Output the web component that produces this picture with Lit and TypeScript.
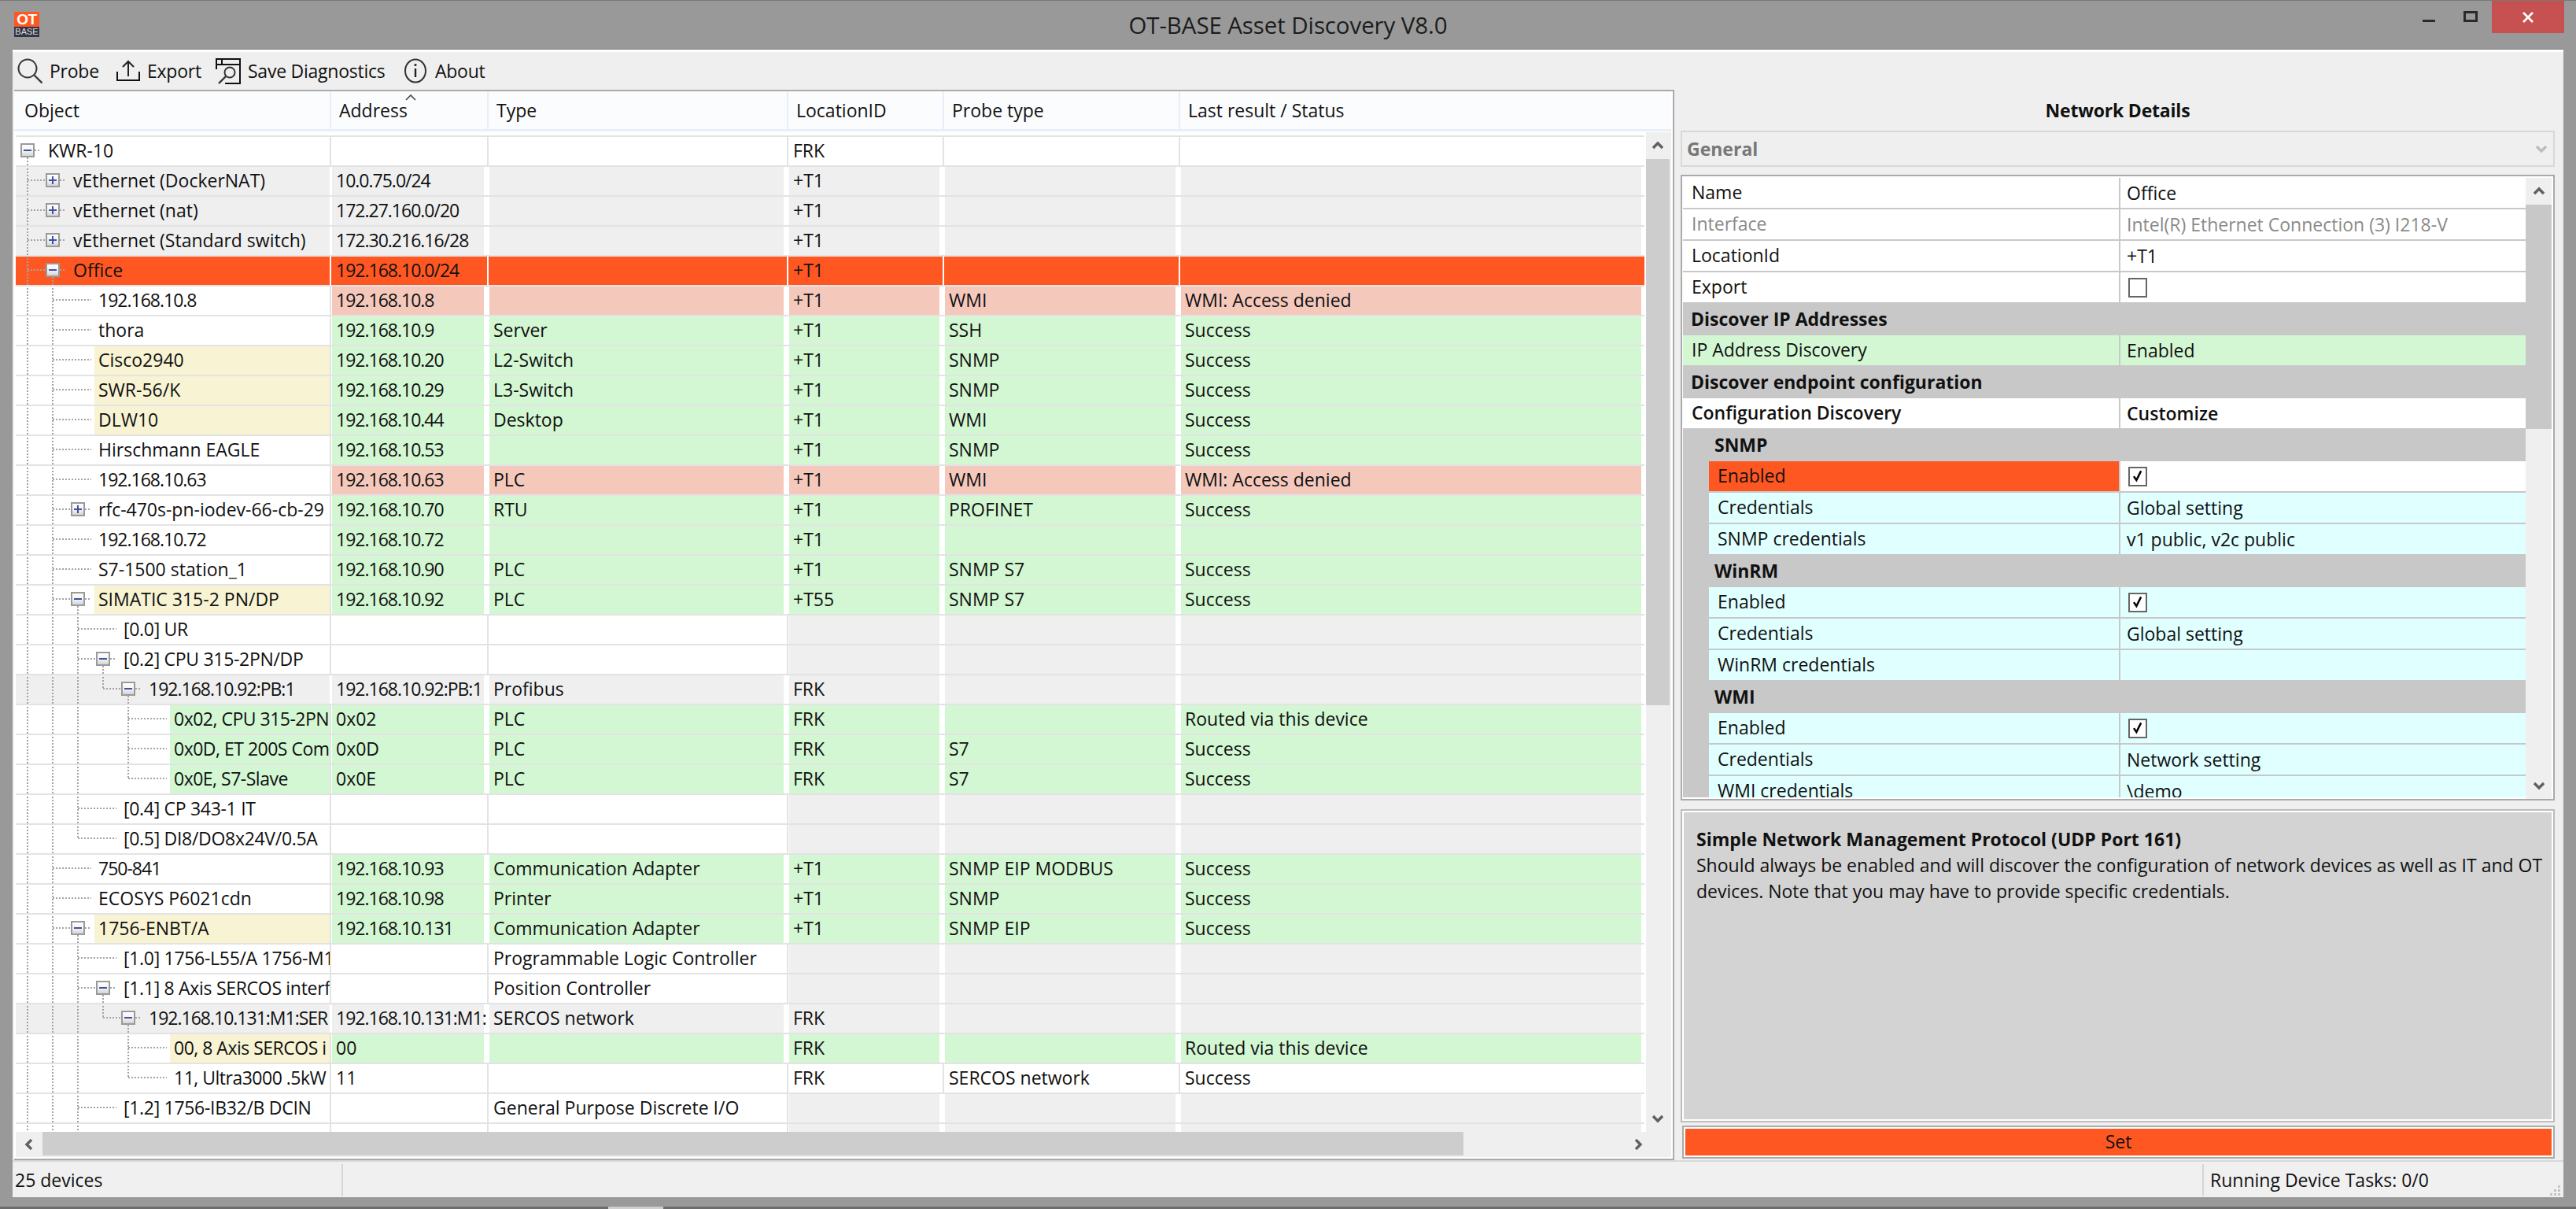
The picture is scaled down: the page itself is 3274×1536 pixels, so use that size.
import { LitElement, html, css, svg, nothing } from "lit";
import { customElement } from "lit/decorators.js";

type Kind = "white" | "gray" | "sel" | "pink" | "green" | "blank";
interface Row { l: number; box?: "+" | "-"; name: string; nf?: "y" | "g"; kind: Kind; c: string[]; }

const r = (l: number, name: string, kind: Kind, c: string[], extra: Partial<Row> = {}): Row => ({ l, name, kind, c, ...extra });
const T1 = "+T1";
const rows: Row[] = [
  r(0, "KWR-10", "white", ["", "", "FRK", "", ""], { box: "-" }),
  r(1, "vEthernet (DockerNAT)", "gray", ["10.0.75.0/24", "", T1, "", ""], { box: "+" }),
  r(1, "vEthernet (nat)", "gray", ["172.27.160.0/20", "", T1, "", ""], { box: "+" }),
  r(1, "vEthernet (Standard switch)", "gray", ["172.30.216.16/28", "", T1, "", ""], { box: "+" }),
  r(1, "Office", "sel", ["192.168.10.0/24", "", T1, "", ""], { box: "-" }),
  r(2, "192.168.10.8", "pink", ["192.168.10.8", "", T1, "WMI", "WMI: Access denied"]),
  r(2, "thora", "green", ["192.168.10.9", "Server", T1, "SSH", "Success"]),
  r(2, "Cisco2940", "green", ["192.168.10.20", "L2-Switch", T1, "SNMP", "Success"], { nf: "y" }),
  r(2, "SWR-56/K", "green", ["192.168.10.29", "L3-Switch", T1, "SNMP", "Success"], { nf: "y" }),
  r(2, "DLW10", "green", ["192.168.10.44", "Desktop", T1, "WMI", "Success"], { nf: "y" }),
  r(2, "Hirschmann EAGLE", "green", ["192.168.10.53", "", T1, "SNMP", "Success"]),
  r(2, "192.168.10.63", "pink", ["192.168.10.63", "PLC", T1, "WMI", "WMI: Access denied"]),
  r(2, "rfc-470s-pn-iodev-66-cb-29", "green", ["192.168.10.70", "RTU", T1, "PROFINET", "Success"], { box: "+" }),
  r(2, "192.168.10.72", "green", ["192.168.10.72", "", T1, "", ""]),
  r(2, "S7-1500 station_1", "green", ["192.168.10.90", "PLC", T1, "SNMP S7", "Success"]),
  r(2, "SIMATIC 315-2 PN/DP", "green", ["192.168.10.92", "PLC", "+T55", "SNMP S7", "Success"], { nf: "y", box: "-" }),
  r(3, "[0.0] UR", "blank", ["", "", "", "", ""]),
  r(3, "[0.2] CPU 315-2PN/DP", "blank", ["", "", "", "", ""], { box: "-" }),
  r(4, "192.168.10.92:PB:1", "gray", ["192.168.10.92:PB:1", "Profibus", "FRK", "", ""], { box: "-" }),
  r(5, "0x02, CPU 315-2PN", "green", ["0x02", "PLC", "FRK", "", "Routed via this device"], { nf: "g" }),
  r(5, "0x0D, ET 200S Com", "green", ["0x0D", "PLC", "FRK", "S7", "Success"], { nf: "g" }),
  r(5, "0x0E, S7-Slave", "green", ["0x0E", "PLC", "FRK", "S7", "Success"], { nf: "g" }),
  r(3, "[0.4] CP 343-1 IT", "blank", ["", "", "", "", ""]),
  r(3, "[0.5] DI8/DO8x24V/0.5A", "blank", ["", "", "", "", ""]),
  r(2, "750-841", "green", ["192.168.10.93", "Communication Adapter", T1, "SNMP EIP MODBUS", "Success"]),
  r(2, "ECOSYS P6021cdn", "green", ["192.168.10.98", "Printer", T1, "SNMP", "Success"]),
  r(2, "1756-ENBT/A", "green", ["192.168.10.131", "Communication Adapter", T1, "SNMP EIP", "Success"], { nf: "y", box: "-" }),
  r(3, "[1.0] 1756-L55/A 1756-M1", "blank", ["", "Programmable Logic Controller", "", "", ""]),
  r(3, "[1.1] 8 Axis SERCOS interf", "blank", ["", "Position Controller", "", "", ""], { box: "-" }),
  r(4, "192.168.10.131:M1:SER", "gray", ["192.168.10.131:M1:", "SERCOS network", "FRK", "", ""], { box: "-" }),
  r(5, "00, 8 Axis SERCOS i", "green", ["00", "", "FRK", "", "Routed via this device"], { nf: "y" }),
  r(5, "11, Ultra3000 .5kW", "white", ["11", "", "FRK", "SERCOS network", "Success"]),
  r(3, "[1.2] 1756-IB32/B DCIN", "blank", ["", "General Purpose Discrete I/O", "", "", ""]),
  r(3, "", "blank", ["", "", "", "", ""]),
];

type Prop =
  | { t: "sec"; label: string; indent?: boolean }
  | { t: "row"; name: string; value?: string; check?: boolean; fill?: "cyan" | "green"; sub?: boolean; off?: boolean; sel?: boolean; bold?: boolean };

const props: Prop[] = [
  { t: "row", name: "Name", value: "Office" },
  { t: "row", name: "Interface", value: "Intel(R) Ethernet Connection (3) I218-V", off: true },
  { t: "row", name: "LocationId", value: "+T1" },
  { t: "row", name: "Export", check: false },
  { t: "sec", label: "Discover IP Addresses" },
  { t: "row", name: "IP Address Discovery", value: "Enabled", fill: "green" },
  { t: "sec", label: "Discover endpoint configuration" },
  { t: "row", name: "Configuration Discovery", value: "Customize", bold: true },
  { t: "sec", label: "SNMP", indent: true },
  { t: "row", name: "Enabled", check: true, sub: true, sel: true },
  { t: "row", name: "Credentials", value: "Global setting", sub: true, fill: "cyan" },
  { t: "row", name: "SNMP credentials", value: "v1 public, v2c public", sub: true, fill: "cyan" },
  { t: "sec", label: "WinRM", indent: true },
  { t: "row", name: "Enabled", check: true, sub: true, fill: "cyan" },
  { t: "row", name: "Credentials", value: "Global setting", sub: true, fill: "cyan" },
  { t: "row", name: "WinRM credentials", value: "", sub: true, fill: "cyan" },
  { t: "sec", label: "WMI", indent: true },
  { t: "row", name: "Enabled", check: true, sub: true, fill: "cyan" },
  { t: "row", name: "Credentials", value: "Network setting", sub: true, fill: "cyan" },
  { t: "row", name: "WMI credentials", value: "\\demo", sub: true, fill: "cyan" },
];

const chevron = (dir: "up" | "down" | "left" | "right", cls = "") => {
  const pts = { up: "1,9 7,3 13,9", down: "1,3 7,9 13,3", left: "9,1 3,7 9,13", right: "3,1 9,7 3,13" }[dir];
  const isV = dir === "up" || dir === "down";
  return html`<svg class="chev ${cls}" width=${isV ? 14 : 12} height=${isV ? 12 : 14} viewBox=${isV ? "0 0 14 12" : "0 0 12 14"}>
    <polyline points=${pts} fill="none" stroke="currentColor" stroke-width="3.4"></polyline></svg>`;
};

function continues(i: number, d: number): boolean {
  for (let j = i + 1; j < rows.length; j++) {
    if (rows[j].l <= d) return false;
    if (rows[j].l === d + 1) return true;
  }
  return d <= 2;
}

function guides(i: number) {
  const row = rows[i];
  const parts: unknown[] = [];
  const L = (x1: number, y1: number, x2: number, y2: number) =>
    svg`<line x1=${x1} y1=${y1} x2=${x2} y2=${y2} stroke="#a4a4a4" stroke-width="2" stroke-dasharray="2 2"></line>`;
  const l = row.l;
  if (row.name !== "" || i === rows.length - 1) {
    for (let d = 0; d < l; d++) {
      const x = 15 + 32 * d;
      const c = continues(i, d);
      if (d === l - 1) {
        parts.push(L(x, 0, x, c ? 38 : 19));
        if (row.name !== "") parts.push(L(x, 19, row.box ? x + 24 : x + 49, 19));
      } else if (c) {
        parts.push(L(x, 0, x, 38));
      }
    }
  }
  if (row.box) {
    const bx = 6 + 32 * l;
    parts.push(L(bx + 18, 19, bx + 26, 19));
    if (row.box === "-") parts.push(L(bx + 9, 28, bx + 9, 38));
    parts.push(svg`<rect x=${bx + 1} y="11" width="16" height="16" fill="url(#bx)" stroke="#9a9a9a" stroke-width="2"></rect>`);
    parts.push(svg`<line x1=${bx + 4} y1="19" x2=${bx + 14} y2="19" stroke="#3f51a5" stroke-width="2"></line>`);
    if (row.box === "+") parts.push(svg`<line x1=${bx + 9} y1="14" x2=${bx + 9} y2="24" stroke="#3f51a5" stroke-width="2"></line>`);
  }
  return html`<svg class="guides" width="399" height="38" viewBox="0 0 399 38">
    <defs><linearGradient id="bx" x1="0" y1="0" x2="0" y2="1"><stop offset="0" stop-color="#fff"></stop><stop offset="0.55" stop-color="#f2f2f2"></stop><stop offset="1" stop-color="#cfcfcf"></stop></linearGradient></defs>
    ${parts}</svg>`;
}

const numCls = (s: string) => (/^[\d.]+[\d./:\-]*/.test(s) && /\d\.\d|^\d+-\d/.test(s) ? "num" : "");

@customElement("app-root")
export class AppRoot extends LitElement {
  static styles = css`
    :host {
      display: block; width: 3274px; height: 1536px; background: #999; overflow: hidden;
      font-family: "Open Sans", "Noto Sans", sans-serif; font-size: 23px; color: #111;
      --orange: #ff5722; --gray: #efefef; --green: #d3f7d3; --pink: #f5c8bc; --yellow: #f7f3d3; --cyan: #e0ffff;
      --line: #e3e3e3; --sec: #c8c8c8;
    }
    .num { letter-spacing: -1px; }
    .label.deep { letter-spacing: -0.3px; }
    .label.deepest { letter-spacing: -0.5px; }
    .label.deep.num, .label.deepest.num { letter-spacing: -1px; }
    .page { display: flex; flex-direction: column; height: 1536px; }
    .titlebar { height: 62px; flex: none; display: grid; grid-template-columns: 1fr auto 1fr; align-items: start; border-top: 1px solid #777; box-sizing: border-box; background: #999; }
    .logo { margin: 14px 0 0 18px; width: 32px; height: 32px; display: flex; flex-direction: column; font-family: "Liberation Sans", sans-serif; text-align: center; }
    .logo b { height: 19px; background: var(--orange); color: #fff; font-size: 19px; line-height: 19px; font-weight: 700; letter-spacing: -0.5px; }
    .logo span { height: 13px; background: #333645; color: #ddd; font-size: 11px; line-height: 13px; }
    .title { font-size: 29.5px; line-height: 62px; color: #1c1c1c; white-space: nowrap; letter-spacing: -0.1px; }
    .winbtns { display: flex; justify-content: flex-end; align-items: flex-start; padding-right: 15px; }
    .min { width: 16px; height: 3px; background: #2a2a2a; margin: 24px 0 0 0; }
    .max { border: 3px solid #2a2a2a; margin: 13px 18px 0 36px; box-sizing: content-box; width: 12px; height: 8px; }
    .close { width: 92px; height: 41px; background: #c75050; display: flex; align-items: center; justify-content: center; }
    .window { flex: none; margin-left: 16px; width: 3242px; height: 1459px; box-sizing: border-box; border-top: 1px solid #808080; background: var(--gray); display: flex; flex-direction: column; }
    .whitebar { height: 3px; background: #fff; flex: none; }
    .toolbar { height: 48px; flex: none; display: flex; align-items: center; padding-left: 6px; letter-spacing: -0.25px; }
    .tool { display: flex; align-items: center; white-space: nowrap; }
    .tool svg { display: block; }
    .tool.a { gap: 9px; width: 126px; }
    .tool.b { gap: 9px; width: 126px; }
    .tool.c { gap: 9px; width: 240px; }
    .tool.d { gap: 11px; }
    .main { flex: none; height: 1360px; display: flex; }
    .pane { width: 2110px; margin-left: 2px; flex: none; box-sizing: border-box; border: solid #aaa; border-width: 2px 2px 2px 0; background: #fff; padding: 0 2px 2px 0; display: grid; grid-template-columns: 2074px 32px; grid-template-rows: 52px 1270px 32px; }
    .hdr { grid-column: 1 / 3; position: relative; display: grid; grid-template-columns: 2px 399px 200px 381px 198px 300px 626px; height: 51px; box-sizing: border-box; border-bottom: 3px solid #e8eff8; background: #fbfcfd; }
    .hdr div { border-left: 2px solid #e6eef9; padding-left: 10px; line-height: 48px; white-space: nowrap; }
    .hdr div.first { border-left: 0; padding-left: 11px; }
    .caret { position: absolute; left: 497px; top: 4px; }
    .vp { overflow: hidden; padding: 4px 2px 0; box-sizing: border-box; height: 1270px; background: #fff; }
    .row { display: grid; grid-template-columns: 399px 200px 381px 198px 300px 592px; height: 38px; box-sizing: border-box; border-top: 2px solid var(--line); position: relative; }
    .name { position: relative; overflow: hidden; white-space: nowrap; display: flex; }
    .guides { position: absolute; left: 0; top: -2px; overflow: visible; }
    .label { line-height: 35px; padding-left: 5px; flex: 1; overflow: hidden; min-width: 0; }
    .label.y { background: var(--yellow); }
    .label.g { background: var(--green); }
    .name.gray { background: var(--gray); }
    .name.sel { background: var(--orange); }
    .cell { border-left: 2px solid var(--line); padding: 0 4px 0 1px; overflow: hidden; white-space: nowrap; display: flex; }
    .cell.wl { border-left-color: #fff; }
    .fill { flex: 1; min-width: 0; padding-left: 5px; line-height: 35px; }
    .fill.gray { background: var(--gray); }
    .fill.green { background: var(--green); }
    .fill.pink { background: var(--pink); }
    .row.sel .cell { padding: 0; border-left-color: #fff; }
    .row.sel .fill { background: var(--orange); padding-left: 6px; }
    .vsb { background: var(--gray); display: flex; flex-direction: column; height: 1270px; color: #606060; }
    .sbarrow { flex: none; display: flex; align-items: center; justify-content: center; }
    .vsb .sbarrow { height: 34px; width: 30px; }
    .vthumb { height: 694px; width: 30px; background: #cdcdcd; flex: none; }
    .grow { flex: 1; }
    .hsb { grid-column: 1 / 3; display: flex; background: var(--gray); height: 32px; box-sizing: border-box; border-left: 2px solid #fff; color: #606060; }
    .hsb .sbarrow { width: 34px; }
    .hthumb { width: 1806px; background: #cdcdcd; height: 30px; }
    .hsb .end { width: 20px; margin-left: auto; margin-right: 32px; }
    .right { width: 1130px; flex: none; box-sizing: border-box; padding: 0 11px 0 8px; display: flex; flex-direction: column; }
    .rtitle { height: 52px; line-height: 52px; flex: none; text-align: center; font-weight: 700; letter-spacing: -0.2px; }
    .combo { height: 46px; flex: none; box-sizing: border-box; border: 2px solid #d8d8d8; color: #777; font-weight: 700; display: flex; align-items: center; justify-content: space-between; padding: 0 8px 0 6px; background: var(--gray); }
    .combo .chev { color: #bdbdbd; }
    .grid { margin-top: 10px; height: 795px; flex: none; box-sizing: border-box; border: 2px solid #aaa; background: #fff; padding: 2px 2px 0 1px; display: flex; overflow: hidden; }
    .plist { width: 1071px; flex: none; overflow: hidden; height: 787px; }
    .psb { width: 33px; flex: none; background: var(--gray); display: flex; flex-direction: column; color: #606060; }
    .psb .sbarrow { height: 34px; }
    .pthumb { height: 285px; background: #c8c8c8; }
    .prow { height: 40px; box-sizing: border-box; border-bottom: 2px solid var(--sec); display: grid; grid-template-columns: 554px 517px; line-height: 37px; background: #fff; }
    .prow .pn { padding-left: 11px; white-space: nowrap; }
    .prow .pv { border-left: 2px solid var(--sec); padding-left: 8px; white-space: nowrap; display: flex; align-items: center; }
    .prow.off { color: #8a8a8a; }
    .prow.green { background: var(--green); }
    .prow.cyan .pv, .prow.cyan .pn { background: var(--cyan); }
    .prow.bold { font-weight: 600; }
    .prow.sub .pn { margin-left: 33px; padding-left: 11px; }
    .prow.sub { background: linear-gradient(90deg, var(--sec) 33px, #fff 33px); }
    .prow.sel .pn { background: var(--orange); }
    .psec { height: 40px; box-sizing: border-box; background: var(--sec); font-weight: 700; line-height: 39px; padding-left: 10px; }
    .psec.indent { padding-left: 40px; }
    .cb { width: 24px; height: 25px; box-sizing: border-box; border: 2px solid #666; background: #fff; display: block; margin-left: 2px; }
    .info { margin-top: 11px; height: 398px; flex: none; box-sizing: border-box; border: 2px solid #bcbcbc; background: #d3d3d3; box-shadow: inset 0 0 0 2px #fff; padding: 20px 6px 20px 18px; line-height: 33px; }
    .info b { display: block; font-weight: 700; }
    .setwrap { margin-top: 4px; height: 42px; flex: none; box-sizing: border-box; margin-left: 2px; border: 2px solid #aaa; padding: 2px; background: #fff; }
    .set { height: 34px; background: var(--orange); text-align: center; line-height: 33px; }
    .status { flex: none; height: 47px; box-sizing: border-box; border-top: 2px solid #d8d8d8; background: #f0f0f0; display: flex; align-items: center; position: relative; }
    .status .s1 { width: 418px; padding-left: 3px; box-sizing: border-box; }
    .status .s2 { height: 40px; border-left: 2px solid #d6d6d6; }
    .status .s3 { margin-left: 2363px; height: 40px; border-left: 2px solid #d6d6d6; padding-left: 8px; line-height: 40px; white-space: nowrap; }
    .grip { position: absolute; right: 3px; bottom: 2px; }
    .bottom { flex: 1; display: flex; flex-direction: column; justify-content: flex-end; }
    .taskline { height: 3px; background: #6c6c6c; display: flex; padding-left: 773px; }
    .taskline i { display: block; width: 70px; height: 3px; background: #cfcfcf; }
  `;

  private tbIcons = {
    search: html`<svg width="32" height="32" viewBox="0 0 32 32"><circle cx="13" cy="13" r="11.5" fill="none" stroke="#3a3a3a" stroke-width="2"></circle><line x1="21.5" y1="21.5" x2="31.5" y2="31.5" stroke="#3a3a3a" stroke-width="2.4"></line></svg>`,
    exp: html`<svg width="30" height="28" viewBox="0 0 30 28"><path d="M1 15v11h28V15" fill="none" stroke="#111" stroke-width="2"></path><path d="M15 21V2M8 9l7-7 7 7" fill="none" stroke="#222" stroke-width="2"></path></svg>`,
    save: html`<svg width="32" height="33" viewBox="0 0 32 33"><path d="M1 14V1h30v31H12" fill="none" stroke="#111" stroke-width="2"></path><path d="M1 8h30M8 1v7" fill="none" stroke="#111" stroke-width="2"></path><circle cx="18" cy="18" r="6.5" fill="none" stroke="#333" stroke-width="2"></circle><line x1="13" y1="23" x2="4" y2="32" stroke="#333" stroke-width="2.4"></line></svg>`,
    about: html`<svg width="28" height="32" viewBox="0 0 28 32"><ellipse cx="14" cy="16" rx="13" ry="14.5" fill="none" stroke="#333" stroke-width="2"></ellipse><path d="M14 13v11" stroke="#222" stroke-width="2.4"></path><circle cx="14" cy="8.5" r="1.6" fill="#222"></circle></svg>`,
  };

  private renderRow(row: Row, i: number) {
    const fillFor = (k: number): string => {
      switch (row.kind) {
        case "gray": return "gray";
        case "pink": return "pink";
        case "green": return "green";
        case "blank": return k < 2 ? "" : "gray";
        default: return "";
      }
    };
    const nameCls = row.kind === "gray" ? "gray" : row.kind === "sel" ? "sel" : "";
    const nameFilled = nameCls !== "";
    const left = 35 + 32 * row.l + 1;
    const depth = row.l >= 5 ? "deepest" : row.l >= 3 ? "deep" : "";
    return html`<div class="row ${row.kind === "sel" ? "sel" : ""}">
      <div class="name ${nameCls}">
        ${guides(i)}
        <div class="label ${row.nf ?? ""} ${numCls(row.name)} ${depth}" style="margin-left:${left}px">${row.name}</div>
      </div>
      ${row.c.map((t, k) => {
        const prevFilled = k === 0 ? nameFilled : fillFor(k - 1) !== "";
        return html`<div class="cell ${prevFilled ? "wl" : ""}"><div class="fill ${fillFor(k)} ${numCls(t)}">${t}</div></div>`;
      })}
    </div>`;
  }

  private renderProp(p: Prop) {
    if (p.t === "sec") return html`<div class="psec ${p.indent ? "indent" : ""}">${p.label}</div>`;
    const cls = [p.off && "off", p.fill, p.sub && "sub", p.sel && "sel", p.bold && "bold"].filter(Boolean).join(" ");
    return html`<div class="prow ${cls}">
      <div class="pn">${p.name}</div>
      <div class="pv">${p.check === undefined ? p.value : html`<svg class="cb" viewBox="0 0 24 25">
        ${p.check ? svg`<path d="M6 12l4 6 7-14" fill="none" stroke="#000" stroke-width="3"></path>` : nothing}</svg>`}</div>
    </div>`;
  }

  render() {
    return html`<div class="page">
      <div class="titlebar">
        <div class="logo"><b>OT</b><span>BASE</span></div>
        <div class="title">OT-BASE Asset Discovery V8.0</div>
        <div class="winbtns">
          <div class="min"></div>
          <div class="max"></div>
          <div class="close"><svg width="14" height="14" viewBox="0 0 14 14"><path d="M1 1l12 12M13 1L1 13" stroke="#fff" stroke-width="2.6"></path></svg></div>
        </div>
      </div>
      <div class="window">
        <div class="whitebar"></div>
        <div class="toolbar">
          <div class="tool a">${this.tbIcons.search}<span>Probe</span></div>
          <div class="tool b">${this.tbIcons.exp}<span>Export</span></div>
          <div class="tool c">${this.tbIcons.save}<span>Save Diagnostics</span></div>
          <div class="tool d">${this.tbIcons.about}<span>About</span></div>
        </div>
        <div class="main">
          <div class="pane">
            <div class="hdr">
              <span></span>
              <div class="first">Object</div><div>Address</div><div>Type</div><div>LocationID</div><div>Probe type</div><div>Last result / Status</div>
              <svg class="caret" width="14" height="8" viewBox="0 0 14 8"><path d="M1 7l6-6 6 6" fill="none" stroke="#444" stroke-width="1.6"></path></svg>
            </div>
            <div class="vp">${rows.map((row, i) => this.renderRow(row, i))}</div>
            <div class="vsb">
              <div class="sbarrow">${chevron("up")}</div>
              <div class="vthumb"></div>
              <div class="grow"></div>
              <div class="sbarrow">${chevron("down")}</div>
            </div>
            <div class="hsb">
              <div class="sbarrow">${chevron("left")}</div>
              <div class="hthumb"></div>
              <div class="sbarrow end">${chevron("right")}</div>
            </div>
          </div>
          <div class="right">
            <div class="rtitle">Network Details</div>
            <div class="combo"><span>General</span>${chevron("down")}</div>
            <div class="grid">
              <div class="plist">${props.map((p) => this.renderProp(p))}</div>
              <div class="psb">
                <div class="sbarrow">${chevron("up")}</div>
                <div class="pthumb"></div>
                <div class="grow"></div>
                <div class="sbarrow">${chevron("down")}</div>
              </div>
            </div>
            <div class="info"><b>Simple Network Management Protocol (UDP Port 161)</b>Should always be enabled and will discover the configuration of network devices as well as IT and OT devices. Note that you may have to provide specific credentials.</div>
            <div class="setwrap"><div class="set">Set</div></div>
          </div>
        </div>
        <div class="status">
          <div class="s1">25 devices</div>
          <div class="s2"></div>
          <div class="s3">Running Device Tasks: 0/0</div>
          <svg class="grip" width="14" height="14" viewBox="0 0 14 14"><path d="M10 1h3v3h-3zM5 6h3v3H5zM10 6h3v3h-3zM0 11h3v3H0zM5 11h3v3H5zM10 11h3v3h-3z" fill="#c4c4c4"></path></svg>
        </div>
      </div>
      <div class="bottom"><div class="taskline"><i></i></div></div>
    </div>`;
  }
}
